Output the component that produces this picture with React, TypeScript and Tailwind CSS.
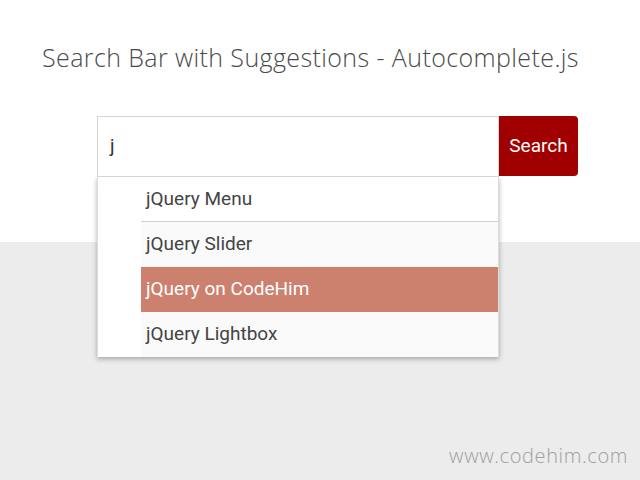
const ITEMS = ["jQuery Menu", "jQuery Slider", "jQuery on CodeHim", "jQuery Lightbox"];

export default function App() {
  const active = 2;
  return (
    <div className="w-[640px] h-[480px] flex flex-col bg-[#ececec] overflow-hidden">
      <div className="h-[242px] bg-white shrink-0 flex flex-col">
        <h1
          className="pt-[39px] pl-[42px] text-[25px] leading-[36px] text-[#4a4a4a] font-light tracking-[0.4px]"
          style={{ fontFamily: '"Open Sans", sans-serif' }}
        >
          Search Bar with Suggestions - Autocomplete.js
        </h1>
      </div>

      <div className="flex-1 flex flex-col justify-end items-end pr-[12px] pb-[9px]">
        <span
          className="text-[20px] font-light tracking-[0.6px] text-[#a0a0a0]"
          style={{ fontFamily: '"Open Sans", sans-serif' }}
        >
          www.codehim.com
        </span>
      </div>

      <div
        className="absolute left-[97px] top-[116px] w-[481px]"
        style={{ fontFamily: "Roboto, sans-serif" }}
      >
        <div className="flex h-[61px]">
          <div className="flex-1 border border-[#d6d6d6] bg-white flex items-center pl-[12px] text-[19px] text-[#333]">
            j
          </div>
          <button className="w-[79px] h-[60px] bg-[#a00000] rounded-r-[4px] text-white text-[19px]">
            Search
          </button>
        </div>
        <ul className="w-[402px] bg-white pl-[43px] shadow-[0_2px_5px_rgba(0,0,0,0.3)] border-x border-[#dcdcdc]">
          {ITEMS.map((item, i) => (
            <li
              key={item}
              className={
                "h-[45px] flex items-center pl-[5px] text-[19px] " +
                (i === active
                  ? "bg-[#cc806e] text-white"
                  : i === 0
                  ? "bg-white text-[#444] border-b border-[#d0d0d0]"
                  : "bg-[#fafafa] text-[#444]")
              }
            >
              {item}
            </li>
          ))}
        </ul>
      </div>
    </div>
  );
}
